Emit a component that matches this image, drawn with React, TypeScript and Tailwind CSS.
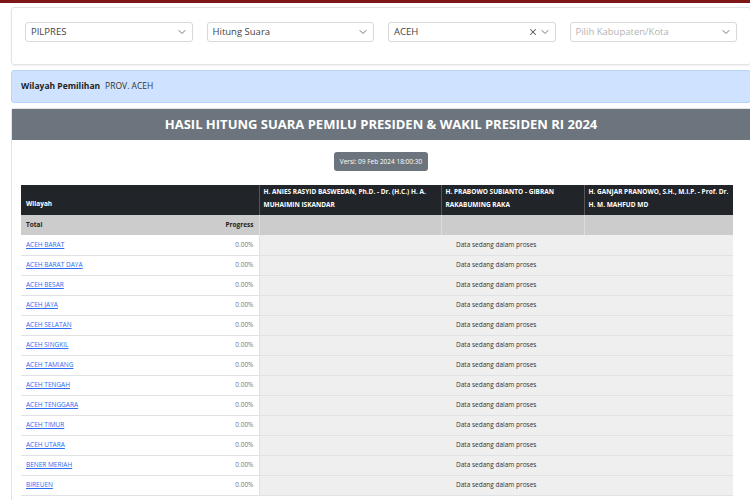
import { ChevronDown, X } from "lucide-react";

const regions = [
  "ACEH BARAT",
  "ACEH BARAT DAYA",
  "ACEH BESAR",
  "ACEH JAYA",
  "ACEH SELATAN",
  "ACEH SINGKIL",
  "ACEH TAMIANG",
  "ACEH TENGAH",
  "ACEH TENGGARA",
  "ACEH TIMUR",
  "ACEH UTARA",
  "BENER MERIAH",
  "BIREUEN",
];

const candidates = [
  "H. ANIES RASYID BASWEDAN, Ph.D. - Dr. (H.C.) H. A. MUHAIMIN ISKANDAR",
  "H. PRABOWO SUBIANTO - GIBRAN RAKABUMING RAKA",
  "H. GANJAR PRANOWO, S.H., M.I.P. - Prof. Dr. H. M. MAHFUD MD",
];

function Select({ value, placeholder, clearable }: { value?: string; placeholder?: string; clearable?: boolean }) {
  return (
    <div className="h-[20px] rounded-[3px] border border-[#d9d9d9] bg-white flex items-center pl-[5px] pr-[4px]">
      <span className={`flex-1 text-[9.5px] ${value ? "text-[#444]" : "text-[#b3b3b3]"}`}>
        {value ?? placeholder}
      </span>
      {clearable && <X size={10} strokeWidth={2.5} className="text-[#555] mr-[1px]" />}
      <ChevronDown size={12} strokeWidth={2} className="text-[#777]" />
    </div>
  );
}

export default function App() {
  return (
    <div className="w-[750px] h-[500px] overflow-hidden bg-white font-['Open_Sans',sans-serif]">
      <div className="h-[3px] bg-[#7d1616]" />
      <div className="w-[740px] ml-[11px] mt-[4px]">
        <div className="rounded-[3px] border border-[#e3e3e3] h-[58px] pt-[14px] px-[13px] shadow-[0_1px_2px_rgba(0,0,0,0.06)]">
          <div className="grid grid-cols-4 gap-x-[14px]">
            <Select value="PILPRES" />
            <Select value="Hitung Suara" />
            <Select value="ACEH" clearable />
            <Select placeholder="Pilih Kabupaten/Kota" />
          </div>
        </div>

        <div className="mt-[5px] h-[33px] rounded-[3px] border border-[#b6d4fe] bg-[#cfe2ff] flex items-center px-[9px] text-[8.5px]">
          <span className="font-bold text-[#222]">Wilayah Pemilihan</span>
          <span className="ml-[5px] text-[#333]">PROV. ACEH</span>
        </div>

        <div className="mt-[5px] border border-[#e3e3e3] rounded-t-[3px]">
          <div className="h-[31px] bg-[#6c757d] flex items-center justify-center text-white font-bold text-[13px]">
            HASIL HITUNG SUARA PEMILU PRESIDEN &amp; WAKIL PRESIDEN RI 2024
          </div>
          <div className="pt-[12px] px-[9px] pb-[20px]">
            <div className="flex justify-center">
              <span className="bg-[#6c757d] text-white text-[6.5px] rounded-[3px] px-[6px] h-[19px] flex items-center">
                Versi: 09 Feb 2024 18:00:30
              </span>
            </div>
            <table className="mt-[14px] w-[712px] border-collapse table-fixed text-[6.5px]">
              <colgroup>
                <col className="w-[238px]" />
                <col className="w-[182px]" />
                <col className="w-[143px]" />
                <col className="w-[149px]" />
              </colgroup>
              <thead>
                <tr className="bg-[#212529] text-white h-[30px]">
                  <th className="align-bottom text-left font-bold px-[5px] pb-[6px] border-r border-[#555]">Wilayah</th>
                  {candidates.map((c, i) => (
                    <th
                      key={i}
                      className={`align-top text-left font-bold px-[4px] pt-0 leading-[13px] ${i < 2 ? "border-r border-[#555]" : ""}`}
                    >
                      {c}
                    </th>
                  ))}
                </tr>
              </thead>
              <tbody>
                <tr className="bg-[#cccccc] h-[20px] font-bold text-[#222]">
                  <td className="px-[5px] border-r border-[#dcdcdc]">
                    <div className="flex justify-between">
                      <span>Total</span>
                      <span>Progress</span>
                    </div>
                  </td>
                  <td className="border-r border-[#dcdcdc]" />
                  <td className="border-r border-[#dcdcdc]" />
                  <td />
                </tr>
                {regions.map((r) => (
                  <tr key={r} className="h-[20px] border-b border-[#e2e2e2]">
                    <td className="px-[5px] bg-white border-r border-[#e2e2e2]">
                      <div className="flex justify-between">
                        <a href="#" className="text-[#2b6cf0] underline">{r}</a>
                        <span className="text-[#777]">0.00%</span>
                      </div>
                    </td>
                    <td colSpan={3} className="bg-[#efefef] text-center text-[#333]">
                      Data sedang dalam proses
                    </td>
                  </tr>
                ))}
              </tbody>
            </table>
          </div>
        </div>
      </div>
    </div>
  );
}
